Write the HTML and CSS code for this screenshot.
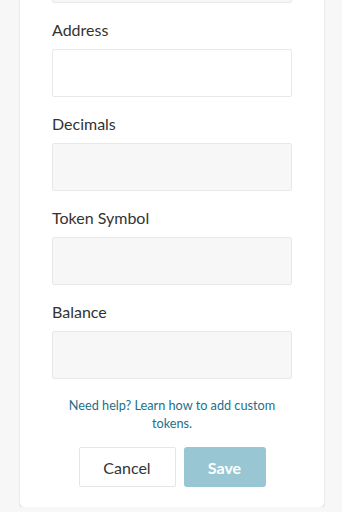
FILE: index.html
```html
<!DOCTYPE html>
<html lang="en">
<head>
<meta charset="utf-8">
<title>Add Token</title>
<link rel="stylesheet" href="styles.css">
</head>
<body>
  <div class="card">
    <div class="field field-first">
      <input class="input input-disabled" type="text" disabled>
    </div>
    <div class="field">
      <label class="label">Address</label>
      <input class="input" type="text">
    </div>
    <div class="field">
      <label class="label">Decimals</label>
      <input class="input input-disabled" type="text" disabled>
    </div>
    <div class="field">
      <label class="label">Token Symbol</label>
      <input class="input input-disabled" type="text" disabled>
    </div>
    <div class="field">
      <label class="label">Balance</label>
      <input class="input input-disabled" type="text" disabled>
    </div>
    <p class="help">Need help? Learn how to add custom tokens.</p>
    <div class="actions">
      <button class="btn btn-cancel" type="button">Cancel</button>
      <button class="btn btn-save" type="button" disabled>Save</button>
    </div>
  </div>
</body>
</html>
```

FILE: styles.css
```css
html, body {
  margin: 0;
  padding: 0;
  background: #f7f7f7;
  font-family: Lato, "Open Sans", sans-serif;
}

.card {
  box-sizing: border-box;
  width: 304px;
  margin: -45px 0 0 20px;
  padding: 0 32px 20px;
  background: #ffffff;
  border-radius: 0 0 4px 4px;
  box-shadow: 0 0 1px rgba(0, 0, 0, 0.18), 0 1px 2px rgba(0, 0, 0, 0.12);
}

.field {
  display: flex;
  flex-direction: column;
}

.label {
  display: block;
  margin: 17px 0 9px;
  font-size: 16px;
  line-height: 20px;
  color: #333333;
}

.input {
  box-sizing: border-box;
  width: 240px;
  height: 48px;
  margin: 0;
  padding: 0 12px;
  border: 1px solid #e8e8e8;
  border-radius: 2px;
  background: #ffffff;
  font-family: inherit;
  font-size: 16px;
  outline: none;
}

.input-disabled {
  background: #f7f7f7;
}

.help {
  margin: 17px 0 0;
  font-size: 12.7px;
  line-height: 18px;
  text-align: center;
  color: #1d6f8a;
}

.actions {
  display: flex;
  justify-content: center;
  gap: 8px;
  margin-top: 15px;
}

.btn {
  box-sizing: border-box;
  height: 40px;
  padding: 0;
  border-radius: 2px;
  font-family: inherit;
  font-size: 16px;
  cursor: pointer;
}

.btn-cancel {
  width: 97px;
  background: #ffffff;
  border: 1px solid #e6e6e6;
  color: #333333;
}

.btn-save {
  width: 82px;
  background: #98c6d3;
  border: none;
  border-radius: 3px;
  color: #ffffff;
  font-weight: 700;
}
```
